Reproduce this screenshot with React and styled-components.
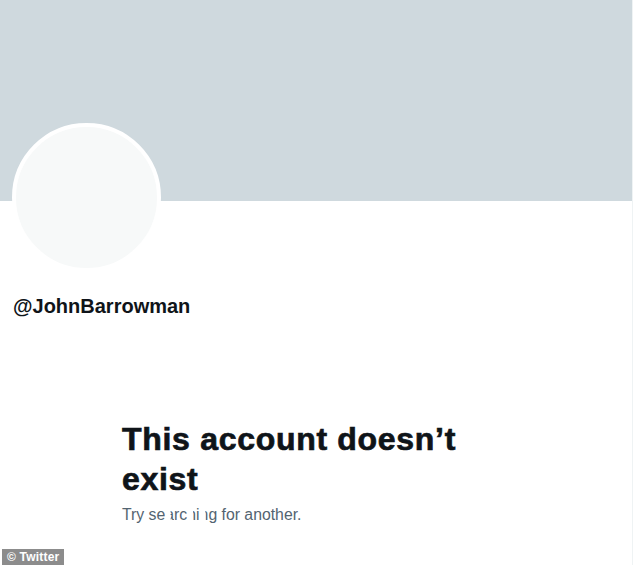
import React from "react";
import styled, { createGlobalStyle } from "styled-components";

const GlobalStyle = createGlobalStyle`
  html, body {
    margin: 0;
    padding: 0;
    background: #ffffff;
  }
  body {
    font-family: "Liberation Sans", Arial, sans-serif;
    color: #0f1419;
  }
`;

const Page = styled.div`
  position: relative;
  width: 634px;
  height: 565px;
  overflow: hidden;
  background: #ffffff;
`;

const Column = styled.main`
  width: 632px;
  height: 100%;
  border-right: 1px solid #eff3f4;
  display: flex;
  flex-direction: column;
`;

const Banner = styled.div`
  height: 201px;
  background: #cfd9de;
`;

const Avatar = styled.div`
  width: 141px;
  height: 141px;
  margin: -78px 0 0 12px;
  border: 4px solid #ffffff;
  border-radius: 50%;
  background: #f7f9f9;
`;

const Handle = styled.div`
  margin: 22px 0 0 13px;
  font-size: 20px;
  line-height: 24px;
  font-weight: 700;
  color: #0f1419;
`;

const Empty = styled.section`
  margin: 101px 0 0 122px;
  width: 360px;
  display: flex;
  flex-direction: column;
  gap: 6px;
`;

const Title = styled.h1`
  margin: 0;
  font-size: 32px;
  line-height: 40px;
  font-weight: 800;
  letter-spacing: 0.7px;
  color: #0f1419;
  -webkit-text-stroke: 0.7px #0f1419;
`;

const Hint = styled.p`
  margin: 0;
  font-size: 15.8px;
  line-height: 20px;
  color: #536471;
`;

const Clipped = styled.span`
  clip-path: inset(0 0 0 ${(p) => p.$cut}%);
`;

const Credit = styled.div`
  position: absolute;
  left: 2px;
  bottom: 0;
  width: 62px;
  height: 16px;
  background: #8c8c8c;
  color: #ffffff;
  font-size: 12px;
  font-weight: 700;
  line-height: 16px;
  padding-left: 5px;
  box-sizing: border-box;
  letter-spacing: 0.2px;
`;

export default function App() {
  return (
    <Page>
      <GlobalStyle />
      <Column>
        <Banner />
        <Avatar />
        <Handle>@JohnBarrowman</Handle>
        <Empty>
          <Title>This account doesn’t exist</Title>
          <Hint>
            Try se<Clipped $cut={60}>a</Clipped>rc<Clipped $cut={65}>h</Clipped>i
            <Clipped $cut={65}>n</Clipped>g for another.
          </Hint>
        </Empty>
      </Column>
      <Credit>© Twitter</Credit>
    </Page>
  );
}
